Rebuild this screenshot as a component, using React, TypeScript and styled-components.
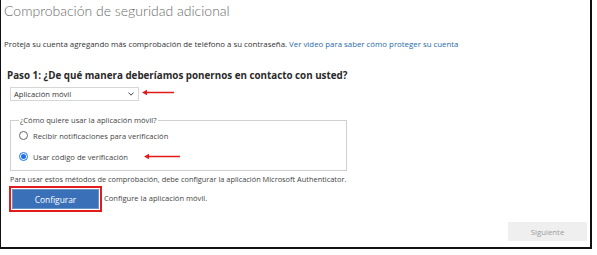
import styled, { createGlobalStyle } from "styled-components";

const GlobalStyle = createGlobalStyle`
    html, body {
        margin: 0;
        padding: 0;
        background: #ffffff;
    }
`;

const Frame = styled.div`
    box-sizing: border-box;
    width: 592px;
    height: 249px;
    border-right: 2px solid #111;
    border-bottom: 2px solid #111;
    border-left: 1px solid #111;
    padding: 0 0 6px 3px;
    font-family: "Open Sans", "Noto Sans", sans-serif;
    color: #333;
    display: flex;
    flex-direction: column;
`;

const Title = styled.h1`
    margin: 0;
    padding-top: 1px;
    font-family: Lato, "Open Sans", sans-serif;
    font-size: 14px;
    font-weight: 300;
    color: #6a6a6a;
    line-height: 20px;
`;

const Intro = styled.p`
    margin: 18px 0 0;
    font-size: 7.85px;
    line-height: 10px;
    color: #333;
`;

const Link = styled.a`
    color: #2a6aa6;
    text-decoration: none;
`;

const Step = styled.h2`
    margin: 20px 0 0 3px;
    font-size: 9.8px;
    font-weight: 700;
    line-height: 14px;
    color: #2a2a2a;
`;

const Body = styled.div`
    padding-left: 6px;
    display: flex;
    flex-direction: column;
`;

const Row = styled.div`
    display: flex;
    align-items: center;
    gap: ${props => props.gap ?? 4}px;
`;

const Select = styled.div`
    box-sizing: border-box;
    width: 129px;
    height: 14px;
    margin-top: 4px;
    border: 1px solid #d6d6d6;
    display: flex;
    align-items: center;
    justify-content: space-between;
    padding: 0 4px 0 3px;
    font-size: 7.6px;
    color: #333;
`;

const Fieldset = styled.fieldset`
    box-sizing: border-box;
    width: 337px;
    margin: 14px 0 0;
    padding: 0 8px 8px;
    border: 1px solid #cfcfcf;
`;

const Legend = styled.legend`
    padding: 0 1px;
    font-size: 7.6px;
    color: #444;
`;

const RadioRow = styled.label`
    display: flex;
    align-items: center;
    gap: 5px;
    height: 11px;
    margin-top: ${props => props.top}px;
    font-size: 7.6px;
    color: #444;
`;

const Radio = styled.span`
    box-sizing: border-box;
    width: 9px;
    height: 9px;
    border-radius: 50%;
    border: 1px solid ${props => (props.checked ? "#1a73e8" : "#666")};
    display: flex;
    align-items: center;
    justify-content: center;

    &::after {
        content: "";
        width: 5px;
        height: 5px;
        border-radius: 50%;
        background: ${props => (props.checked ? "#1a73e8" : "transparent")};
    }
`;

const ArrowSlot = styled.span`
    display: flex;
    margin-left: 10px;
`;

const Note = styled.p`
    margin: 3px 0 0;
    font-size: 7.4px;
    line-height: 10px;
    color: #444;
`;

const Highlight = styled.div`
    box-sizing: border-box;
    margin: 2px 0 0 -1px;
    border: 2px solid #e21b1b;
    padding: 1px;
`;

const PrimaryButton = styled.button`
    box-sizing: border-box;
    display: block;
    width: 87px;
    height: 20px;
    border: 1px solid #6a92c8;
    background: #3a70b8;
    color: #fff;
    font-family: inherit;
    font-size: 8.4px;
    padding: 0;
`;

const Hint = styled.span`
    font-size: 7.6px;
    color: #444;
`;

const Footer = styled.div`
    display: flex;
    justify-content: flex-end;
    padding-right: 3px;
    margin-top: auto;
`;

const NextButton = styled.button`
    width: 79px;
    height: 19px;
    border: none;
    background: #efefef;
    color: #9a9a9a;
    font-family: inherit;
    font-size: 7.8px;
    padding: 0;
`;

const Arrow = ({ width }: { width: number }) => (
    <svg width={width} height="7" viewBox={`0 0 ${width} 7`}>
        <path d={`M1 3.5 L6 0.8 L6 2.7 L${width} 2.7 L${width} 4.3 L6 4.3 L6 6.2 Z`} fill="#e31b1b" />
    </svg>
);

const Chevron = () => (
    <svg width="6" height="4" viewBox="0 0 6 4">
        <path d="M0.5 0.6 L3 3.2 L5.5 0.6" fill="none" stroke="#444" strokeWidth="1" />
    </svg>
);

const App = () => (
    <>
        <GlobalStyle />
        <Frame>
            <Title>Comprobación de seguridad adicional</Title>
            <Intro>
                Proteja su cuenta agregando más comprobación de teléfono a su contraseña.{" "}
                <Link href="#">Ver video para saber cómo proteger su cuenta</Link>
            </Intro>
            <Step>Paso 1: ¿De qué manera deberíamos ponernos en contacto con usted?</Step>
            <Body>
                <Row gap={2}>
                    <Select>
                        <span>Aplicación móvil</span>
                        <Chevron />
                    </Select>
                    <Arrow width={33} />
                </Row>
                <Fieldset>
                    <Legend>¿Cómo quiere usar la aplicación móvil?</Legend>
                    <RadioRow top={5}>
                        <Radio />
                        Recibir notificaciones para verificación
                    </RadioRow>
                    <RadioRow top={10}>
                        <Radio checked />
                        Usar código de verificación
                        <ArrowSlot>
                            <Arrow width={37} />
                        </ArrowSlot>
                    </RadioRow>
                </Fieldset>
                <Note>Para usar estos métodos de comprobación, debe configurar la aplicación Microsoft Authenticator.</Note>
                <Row gap={2}>
                    <Highlight>
                        <PrimaryButton>Configurar</PrimaryButton>
                    </Highlight>
                    <Hint>Configure la aplicación móvil.</Hint>
                </Row>
            </Body>
            <Footer>
                <NextButton>Siguiente</NextButton>
            </Footer>
        </Frame>
    </>
);

export default App;
